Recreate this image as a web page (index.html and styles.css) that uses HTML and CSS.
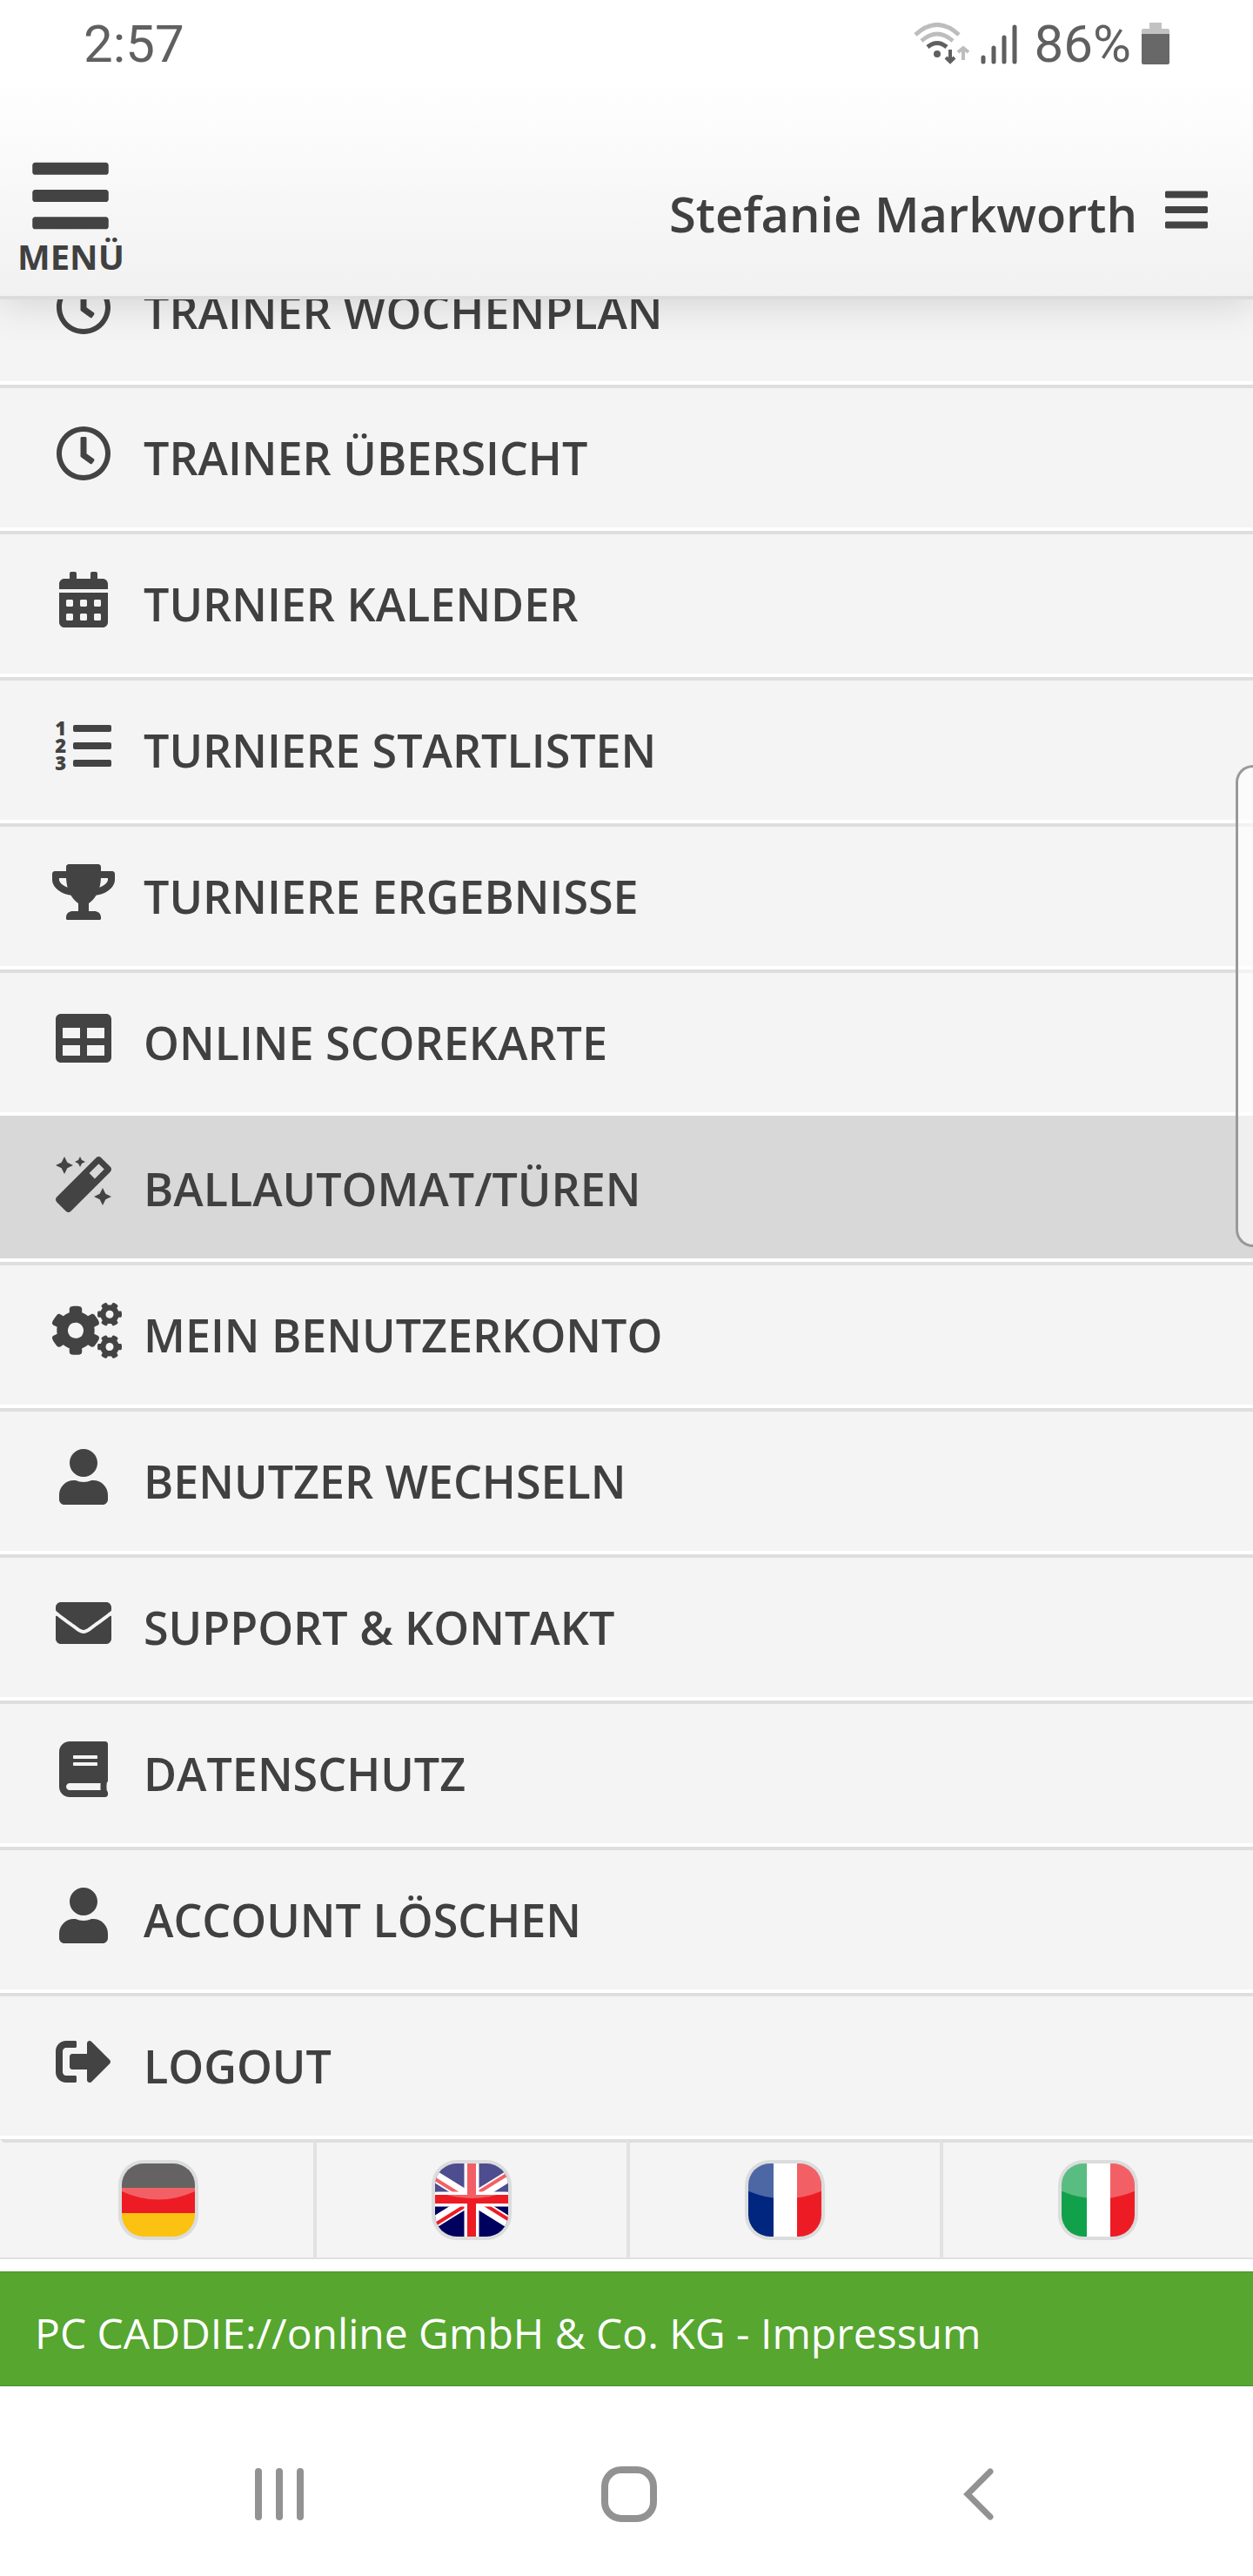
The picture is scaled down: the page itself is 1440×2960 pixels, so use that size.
FILE: index.html
```html
<!DOCTYPE html>
<html lang="de">
<head>
  <meta charset="UTF-8">
  <meta name="viewport" content="width=device-width, initial-scale=1.0">
  <title>PC CADDIE://online</title>
  <link rel="stylesheet" href="styles.css">
</head>
<body>
<header class="header">
  <div class="status">
    <span class="time">2:57</span>
    <div class="status-icons">
      <svg class="wifi" width="66" height="48" viewBox="0 0 66 48" fill="none">
        <path d="M3 14Q28-9 53 14" stroke="#bdbdbd" stroke-width="5"/>
        <path d="M10 21Q28 5 46 21" stroke="#bdbdbd" stroke-width="5"/>
        <path d="M17 28Q28 19 39 28" stroke="#5f5f5f" stroke-width="5"/>
        <circle cx="28" cy="36" r="4" fill="#5f5f5f"/>
        <path d="M43 31v12M38 40l5 5 5-5" stroke="#5f5f5f" stroke-width="4"/>
        <path d="M58 43V30M52 34l6-5 6 5" stroke="#bdbdbd" stroke-width="4"/>
      </svg>
      <svg class="signal" width="42" height="48" viewBox="0 0 42 48" stroke="#5f5f5f" stroke-width="5" stroke-linecap="round">
        <path d="M3 40v5M15 29v16M27 17v28M39 5v40"/>
      </svg>
      <span>86%</span>
      <svg class="battery" width="32" height="48" viewBox="0 0 32 48">
        <path d="M9 0h14v7h7q2 0 2 2v5H0V9q0-2 2-2h7z" fill="#c2c2c2"/>
        <path d="M0 13h32v33q0 2-2 2H2q-2 0-2-2z" fill="#686868"/>
      </svg>
    </div>
  </div>
  <div class="bar">
    <button class="menu-btn" type="button">
      <svg width="88" height="100" viewBox="0 0 448 512"><path d="M16 132h416c9 0 16-7 16-16V76c0-9-7-16-16-16H16C7 60 0 67 0 76v40c0 9 7 16 16 16zm0 160h416c9 0 16-7 16-16v-40c0-9-7-16-16-16H16c-9 0-16 7-16 16v40c0 9 7 16 16 16zm0 160h416c9 0 16-7 16-16v-40c0-9-7-16-16-16H16c-9 0-16 7-16 16v40c0 9 7 16 16 16z"/></svg>
      <span>MENÜ</span>
    </button>
    <button class="user-btn" type="button">
      <span>Stefanie Markworth</span>
      <svg width="49" height="56" viewBox="0 0 448 512"><path d="M16 132h416c9 0 16-7 16-16V76c0-9-7-16-16-16H16C7 60 0 67 0 76v40c0 9 7 16 16 16zm0 160h416c9 0 16-7 16-16v-40c0-9-7-16-16-16H16c-9 0-16 7-16 16v40c0 9 7 16 16 16zm0 160h416c9 0 16-7 16-16v-40c0-9-7-16-16-16H16c-9 0-16 7-16 16v40c0 9 7 16 16 16z"/></svg>
    </button>
  </div>
</header>

<nav class="menu">
  <a class="item" href="#">
    <svg class="icon" viewBox="0 0 512 512"><path id="clock" d="M256 8C119 8 8 119 8 256s111 248 248 248 248-111 248-248S393 8 256 8zm0 448c-110.500 0-200-89.500-200-200S145.500 56 256 56s200 89.500 200 200-89.500 200-200 200zm61.800-104.400l-84.900-61.700c-3.100-2.300-4.900-5.900-4.900-9.700V116c0-6.600 5.400-12 12-12h32c6.600 0 12 5.400 12 12v141.700l66.800 48.600c5.400 3.900 6.500 11.400 2.600 16.800L334.600 349c-3.900 5.300-11.400 6.500-16.800 2.600z"/></svg>
    <span>TRAINER WOCHENPLAN</span>
  </a>
  <a class="item" href="#">
    <svg class="icon" viewBox="0 0 512 512"><use href="#clock"/></svg>
    <span>TRAINER ÜBERSICHT</span>
  </a>
  <a class="item" href="#">
    <svg class="icon" viewBox="0 0 448 512"><path d="M0 464c0 26.500 21.500 48 48 48h352c26.500 0 48-21.500 48-48V192H0v272zm320-196c0-6.600 5.400-12 12-12h40c6.600 0 12 5.400 12 12v40c0 6.600-5.400 12-12 12h-40c-6.600 0-12-5.400-12-12v-40zm0 128c0-6.600 5.400-12 12-12h40c6.600 0 12 5.400 12 12v40c0 6.600-5.400 12-12 12h-40c-6.600 0-12-5.400-12-12v-40zM192 268c0-6.600 5.400-12 12-12h40c6.600 0 12 5.400 12 12v40c0 6.600-5.400 12-12 12h-40c-6.600 0-12-5.400-12-12v-40zm0 128c0-6.600 5.400-12 12-12h40c6.600 0 12 5.400 12 12v40c0 6.600-5.400 12-12 12h-40c-6.600 0-12-5.400-12-12v-40zM64 268c0-6.600 5.400-12 12-12h40c6.600 0 12 5.400 12 12v40c0 6.600-5.400 12-12 12H76c-6.600 0-12-5.400-12-12v-40zm0 128c0-6.600 5.400-12 12-12h40c6.600 0 12 5.400 12 12v40c0 6.600-5.400 12-12 12H76c-6.600 0-12-5.400-12-12v-40zM400 64h-48V16c0-8.800-7.200-16-16-16h-32c-8.800 0-16 7.200-16 16v48H160V16c0-8.800-7.200-16-16-16h-32c-8.800 0-16 7.200-16 16v48H48C21.500 64 0 85.500 0 112v48h448v-48c0-26.500-21.500-48-48-48z"/></svg>
    <span>TURNIER KALENDER</span>
  </a>
  <a class="item" href="#">
    <svg class="icon" viewBox="0 0 512 512">
      <text class="digit" x="46" y="160">1</text>
      <text class="digit" x="46" y="320">2</text>
      <text class="digit" x="46" y="480">3</text>
      <rect x="160" y="64" width="352" height="64" rx="16"/>
      <rect x="160" y="224" width="352" height="64" rx="16"/>
      <rect x="160" y="384" width="352" height="64" rx="16"/>
    </svg>
    <span>TURNIERE STARTLISTEN</span>
  </a>
  <a class="item" href="#">
    <svg class="icon" viewBox="0 0 576 512"><path d="M552 64H448V24c0-13.300-10.700-24-24-24H152c-13.300 0-24 10.700-24 24v40H24C10.700 64 0 74.700 0 88v56c0 35.700 22.500 72.400 61.900 100.700 31.500 22.700 69.800 37.100 110 41.700C203.300 338.500 240 360 240 360v72h-48c-35.300 0-64 20.700-64 56v12c0 6.600 5.400 12 12 12h296c6.600 0 12-5.400 12-12v-12c0-35.300-28.700-56-64-56h-48v-72s36.700-21.500 68.100-73.600c40.300-4.600 78.600-19 110-41.700 39.300-28.300 61.900-65 61.900-100.700V88c0-13.300-10.700-24-24-24zM99.300 192.800C74.900 175.200 64 155.600 64 144v-16h64.200c1 32.600 5.800 61.200 12.800 86.200-15.100-5.200-29.200-12.400-41.700-21.400zM512 144c0 16.100-17.700 36.100-35.300 48.800-12.500 9-26.700 16.200-41.800 21.400 7-25 11.800-53.600 12.800-86.200H512v16z"/></svg>
    <span>TURNIERE ERGEBNISSE</span>
  </a>
  <a class="item" href="#">
    <svg class="icon" viewBox="0 0 512 512"><path d="M464 32H48C21 32 0 53 0 80v352c0 27 21 48 48 48h416c27 0 48-21 48-48V80c0-27-21-48-48-48zM224 416H64v-96h160v96zm0-160H64v-96h160v96zm224 160H288v-96h160v96zm0-160H288v-96h160v96z"/></svg>
    <span>ONLINE SCOREKARTE</span>
  </a>
  <a class="item active" href="#">
    <svg class="icon" viewBox="0 0 512 512"><path d="M224 96l16-32 32-16-32-16-16-32-16 32-32 16 32 16 16 32zM80 160l26.660-53.330L160 80l-53.340-26.670L80 0 53.340 53.330 0 80l53.340 26.670L80 160zm352 128l-26.660 53.330L352 368l53.340 26.670L432 448l26.660-53.330L512 368l-53.340-26.670L432 288zm70.620-193.770L417.770 9.380C411.530 3.120 403.340 0 395.150 0c-8.190 0-16.380 3.120-22.630 9.380L9.380 372.520c-12.500 12.500-12.500 32.760 0 45.250l84.850 84.850c6.250 6.250 14.440 9.370 22.620 9.370 8.190 0 16.380-3.120 22.630-9.370l363.140-363.150c12.500-12.480 12.500-32.750 0-45.240zM359.450 203.460l-50.910-50.910 86.600-86.600 50.910 50.910-86.600 86.600z"/></svg>
    <span>BALLAUTOMAT/TÜREN</span>
  </a>
  <a class="item" href="#">
    <svg class="icon" viewBox="0 0 576 512"><path d="M512.100 191l-8.200 14.300c-3 5.300-9.400 7.500-15.100 5.400-11.800-4.400-22.600-10.700-32.100-18.600-4.600-3.800-5.800-10.500-2.800-15.700l8.200-14.300c-6.900-8-12.300-17.300-15.900-27.400h-16.500c-6 0-11.200-4.300-12.200-10.300-2-12-2.100-24.600 0-37.100 1-6 6.200-10.400 12.200-10.400h16.500c3.600-10.100 9-19.400 15.900-27.400l-8.200-14.300c-3-5.200-1.900-11.900 2.800-15.700 9.500-7.900 20.400-14.200 32.100-18.600 5.700-2.100 12.100.1 15.100 5.400l8.200 14.300c10.500-1.900 21.200-1.900 31.700 0L552 6.300c3-5.300 9.400-7.500 15.100-5.400 11.800 4.400 22.600 10.700 32.100 18.600 4.600 3.800 5.800 10.500 2.800 15.700l-8.200 14.300c6.900 8 12.300 17.300 15.900 27.400h16.500c6 0 11.200 4.300 12.200 10.300 2 12 2.100 24.600 0 37.100-1 6-6.200 10.400-12.200 10.400h-16.500c-3.600 10.100-9 19.400-15.900 27.400l8.200 14.300c3 5.200 1.900 11.900-2.800 15.700-9.500 7.900-20.400 14.200-32.100 18.600-5.700 2.100-12.100-.1-15.100-5.400l-8.200-14.300c-10.400 1.900-21.200 1.900-31.700 0zm-10.500-58.800c38.500 29.600 82.400-14.300 52.800-52.800-38.500-29.700-82.400 14.300-52.800 52.800zM386.300 286.100l33.700 16.800c10.100 5.800 14.500 18.100 10.500 29.100-8.900 24.200-26.400 46.400-42.600 65.800-7.400 8.900-20.200 11.100-30.300 5.300l-29.100-16.800c-16 13.700-34.600 24.600-54.900 31.700v33.600c0 11.600-8.300 21.600-19.700 23.600-24.600 4.200-50.400 4.400-75.900 0-11.500-2-20-11.900-20-23.600V418c-20.300-7.200-38.900-18-54.900-31.700L74 403c-10 5.800-22.900 3.600-30.300-5.300-16.200-19.400-33.300-41.600-42.200-65.700-4-10.900.4-23.200 10.500-29.100l33.300-16.800c-3.900-20.900-3.900-42.400 0-63.400L12 205.800c-10.100-5.800-14.600-18.100-10.500-29 8.900-24.200 26-46.400 42.200-65.800 7.400-8.900 20.200-11.100 30.300-5.300l29.100 16.800c16-13.700 34.600-24.600 54.900-31.700V57.100c0-11.500 8.200-21.500 19.600-23.500 24.600-4.200 50.500-4.400 76-.1 11.500 2 20 11.900 20 23.600v33.600c20.300 7.200 38.900 18 54.900 31.700l29.100-16.800c10-5.800 22.900-3.600 30.300 5.300 16.200 19.400 33.200 41.600 42.100 65.800 4 10.900.1 23.200-10 29.100l-33.700 16.800c3.900 21 3.900 42.500 0 63.500zm-117.600 21.100c59.200-77-28.700-164.900-105.700-105.700-59.200 77 28.700 164.900 105.700 105.700zm243.400 182.700l-8.200 14.300c-3 5.300-9.400 7.500-15.100 5.400-11.800-4.400-22.600-10.700-32.100-18.600-4.600-3.800-5.800-10.500-2.800-15.700l8.200-14.300c-6.900-8-12.300-17.300-15.900-27.400h-16.500c-6 0-11.200-4.300-12.200-10.300-2-12-2.100-24.600 0-37.100 1-6 6.200-10.400 12.200-10.400h16.500c3.600-10.100 9-19.400 15.900-27.400l-8.200-14.300c-3-5.200-1.900-11.900 2.800-15.700 9.500-7.900 20.400-14.200 32.100-18.600 5.700-2.100 12.100.1 15.100 5.400l8.200 14.300c10.500-1.900 21.200-1.900 31.700 0l8.200-14.300c3-5.300 9.400-7.500 15.100-5.400 11.800 4.400 22.600 10.700 32.100 18.600 4.600 3.800 5.800 10.500 2.800 15.700l-8.200 14.300c6.900 8 12.300 17.300 15.900 27.400h16.500c6 0 11.200 4.300 12.200 10.300 2 12 2.100 24.600 0 37.100-1 6-6.200 10.400-12.200 10.400h-16.500c-3.600 10.100-9 19.400-15.900 27.400l8.200 14.300c3 5.200 1.900 11.900-2.800 15.700-9.500 7.900-20.400 14.200-32.100 18.600-5.700 2.100-12.100-.1-15.100-5.400l-8.200-14.300c-10.400 1.900-21.200 1.900-31.700 0zM501.600 431c38.500 29.600 82.400-14.300 52.800-52.800-38.500-29.600-82.400 14.300-52.800 52.800z"/></svg>
    <span>MEIN BENUTZERKONTO</span>
  </a>
  <a class="item" href="#">
    <svg class="icon" viewBox="0 0 448 512"><path id="user" d="M224 256c70.700 0 128-57.300 128-128S294.700 0 224 0 96 57.300 96 128s57.300 128 128 128zm89.600 32h-16.700c-22.200 10.200-46.900 16-72.900 16s-50.600-5.800-72.900-16h-16.700C60.200 288 0 348.200 0 422.400V464c0 26.500 21.500 48 48 48h352c26.500 0 48-21.500 48-48v-41.600c0-74.200-60.200-134.400-134.400-134.400z"/></svg>
    <span>BENUTZER WECHSELN</span>
  </a>
  <a class="item" href="#">
    <svg class="icon" viewBox="0 0 512 512"><path d="M502.300 190.800c3.900-3.100 9.700-.2 9.700 4.700V400c0 26.500-21.500 48-48 48H48c-26.500 0-48-21.500-48-48V195.600c0-5 5.700-7.800 9.700-4.700 22.400 17.400 52.100 39.500 154.100 113.600 21.100 15.400 56.700 47.800 92.200 47.600 35.700.3 72-32.800 92.300-47.600 102-74.100 131.600-96.300 154-113.700zM256 320c23.200.4 56.600-29.200 73.400-41.400 132.700-96.300 142.800-104.700 173.400-128.700 5.800-4.500 9.200-11.500 9.200-18.900v-19c0-26.500-21.500-48-48-48H48c-26.500 0-48 21.500-48 48v19c0 7.400 3.400 14.300 9.200 18.900 30.600 23.900 40.700 32.400 173.400 128.700 16.800 12.200 50.200 41.800 73.400 41.400z"/></svg>
    <span>SUPPORT &amp; KONTAKT</span>
  </a>
  <a class="item" href="#">
    <svg class="icon" viewBox="0 0 448 512"><path d="M448 360V24c0-13.300-10.700-24-24-24H96C43 0 0 43 0 96v320c0 53 43 96 96 96h328c13.300 0 24-10.700 24-24v-16c0-7.500-3.500-14.300-8.900-18.700-4.200-15.400-4.200-59.300 0-74.700 5.400-4.300 8.900-11.100 8.900-18.600zM128 134c0-3.300 2.700-6 6-6h212c3.300 0 6 2.700 6 6v20c0 3.300-2.700 6-6 6H134c-3.300 0-6-2.700-6-6v-20zm0 64c0-3.300 2.700-6 6-6h212c3.300 0 6 2.700 6 6v20c0 3.300-2.700 6-6 6H134c-3.300 0-6-2.700-6-6v-20zm253.400 250H96c-17.700 0-32-14.300-32-32 0-17.600 14.400-32 32-32h285.400c-1.900 17.100-1.900 46.900 0 64z"/></svg>
    <span>DATENSCHUTZ</span>
  </a>
  <a class="item" href="#">
    <svg class="icon" viewBox="0 0 448 512"><use href="#user"/></svg>
    <span>ACCOUNT LÖSCHEN</span>
  </a>
  <a class="item" href="#">
    <svg class="icon" viewBox="0 0 512 512"><path d="M497 273L329 441c-15 15-41 4.500-41-17v-96H152c-13.300 0-24-10.700-24-24v-96c0-13.300 10.700-24 24-24h136V88c0-21.400 25.900-32 41-17l168 168c9.300 9.400 9.300 24.600 0 34zM192 436v-40c0-6.600-5.400-12-12-12H96c-17.700 0-32-14.300-32-32V160c0-17.700 14.300-32 32-32h84c6.600 0 12-5.400 12-12V76c0-6.600-5.400-12-12-12H96c-53 0-96 43-96 96v192c0 53 43 96 96 96h84c6.600 0 12-5.400 12-12z"/></svg>
    <span>LOGOUT</span>
  </a>
</nav>

<div class="languages">
  <a class="lang" href="#" aria-label="Deutsch">
    <svg class="flag" viewBox="0 0 92 92">
      <defs>
        <clipPath id="shape"><rect x="4" y="4" width="84" height="84" rx="25"/></clipPath>
      </defs>
      <rect class="rim" width="92" height="92" rx="29"/>
      <g clip-path="url(#shape)">
        <path fill="#231f20" d="M0 0h92v32H0z"/>
        <path fill="#ed1c24" d="M0 32h92v29H0z"/>
        <path fill="#fcc212" d="M0 61h92v31H0z"/>
        <path class="gloss" d="M0 0h92v34Q46 57 0 34z"/>
      </g>
    </svg>
  </a>
  <a class="lang" href="#" aria-label="English">
    <svg class="flag" viewBox="0 0 92 92">
      <rect class="rim" width="92" height="92" rx="29"/>
      <g clip-path="url(#shape)">
        <path fill="#00005f" d="M0 0h92v92H0z"/>
        <path stroke="#fff" stroke-width="13" d="M-4 14l100 62M96 14L-4 76"/>
        <path stroke="#ed1c24" stroke-width="4" d="M-4 17l50 31M46 42l50 31M46 42l50-31M-4 79l50-31"/>
        <path stroke="#fff" stroke-width="17" d="M46 0v92M0 45h92"/>
        <path stroke="#ed1c24" stroke-width="10" d="M46 0v92M0 45h92"/>
        <path class="gloss" d="M0 0h92v34Q46 54 0 34z"/>
      </g>
    </svg>
  </a>
  <a class="lang" href="#" aria-label="Français">
    <svg class="flag" viewBox="0 0 92 92">
      <rect class="rim" width="92" height="92" rx="29"/>
      <g clip-path="url(#shape)">
        <path fill="#00267f" d="M0 0h33v92H0z"/>
        <path fill="#fff" d="M33 0h27v92H33z"/>
        <path fill="#ed1c24" d="M60 0h32v92H60z"/>
        <path class="gloss" d="M0 0h92v34Q46 55 0 34z"/>
      </g>
    </svg>
  </a>
  <a class="lang" href="#" aria-label="Italiano">
    <svg class="flag" viewBox="0 0 92 92">
      <rect class="rim" width="92" height="92" rx="29"/>
      <g clip-path="url(#shape)">
        <path fill="#12a14b" d="M0 0h33v92H0z"/>
        <path fill="#fff" d="M33 0h27v92H33z"/>
        <path fill="#ed1c24" d="M60 0h32v92H60z"/>
        <path class="gloss" d="M0 0h92v34Q46 55 0 34z"/>
      </g>
    </svg>
  </a>
</div>

<footer class="footer">PC CADDIE://online GmbH &amp; Co. KG - <a href="#">Impressum</a></footer>

<div class="system-nav">
  <button type="button" aria-label="Letzte Apps">
    <svg width="64" height="64" viewBox="0 0 64 64"><path stroke-width="8" d="M8 6v52M32 6v52M56 6v52"/></svg>
  </button>
  <button type="button" aria-label="Startseite">
    <svg width="64" height="64" viewBox="0 0 64 64"><rect x="4" y="4" width="56" height="56" rx="19" stroke-width="8"/></svg>
  </button>
  <button type="button" aria-label="Zurück">
    <svg width="64" height="64" viewBox="0 0 64 64"><path stroke-width="7" d="M45 6L19 32l26 26"/></svg>
  </button>
</div>

<div class="edge-handle"></div>
</body>
</html>
```
FILE: styles.css
```css
* {
  box-sizing: border-box;
}

body {
  margin: 0;
  position: relative;
  background: #fff;
  color: #404040;
  font-family: "Open Sans", "Noto Sans", sans-serif;
}

a {
  color: inherit;
  text-decoration: none;
}

button {
  background: none;
  border: none;
  color: inherit;
  cursor: pointer;
  font-family: inherit;
  padding: 0;
}

svg {
  display: block;
  flex: none;
}

/* header */
.header {
  position: relative;
  z-index: 1;
  border-bottom: 4px solid #dcdcdc;
  background: linear-gradient(#fff 90px, #f1f1f1);
  box-shadow: 0 8px 40px rgba(0, 0, 0, 0.12);
}

.status {
  display: flex;
  align-items: center;
  justify-content: space-between;
  height: 100px;
  padding: 0 96px;
  color: #606060;
  font-family: Roboto, sans-serif;
  font-size: 60px;
}

.status-icons {
  display: flex;
  align-items: center;
}

.signal {
  margin: 0 20px 0 12px;
}

.battery {
  margin-left: 12px;
}

.bar {
  display: flex;
  align-items: center;
  justify-content: space-between;
  height: 240px;
  padding: 50px 52px 0 20px;
}

.bar svg,
.icon {
  fill: #434343;
}

.menu-btn {
  display: flex;
  flex-direction: column;
  align-items: center;
  align-self: flex-start;
  margin-top: 25px;
  font-size: 40px;
  font-weight: 700;
  line-height: 40px;
}

.user-btn {
  display: flex;
  align-items: center;
  gap: 32px;
  font-size: 56px;
  font-weight: 600;
  line-height: 60px;
}

.user-btn svg {
  margin-bottom: 8px;
}

/* menu, the first row scrolls under the header */
.menu {
  margin-top: -70px;
}

.item {
  display: flex;
  align-items: center;
  gap: 33px;
  height: 168px;
  padding: 0 0 2px 60px;
  border-top: 4px solid #dedede;
  border-bottom: 4px solid #fff;
  background: #f4f4f4;
  font-size: 52px;
  font-weight: 600;
}

.item.active {
  border-top-color: #d8d8d8;
  background: #d8d8d8;
}

.icon {
  width: 72px;
  height: 64px;
  margin-bottom: 8px;
  overflow: visible;
}

.digit {
  font-size: 176px;
  font-weight: 800;
  text-anchor: middle;
}

/* languages */
.languages {
  display: grid;
  grid-template-columns: repeat(4, 1fr);
  margin-bottom: 14px;
  border-bottom: 2px solid #e0e0e0;
  background: #f4f4f4;
}

.lang {
  display: flex;
  justify-content: center;
  padding: 20px 0;
  border-top: 4px solid #dedede;
  border-left: 4px solid #e2e2e2;
}

.lang:first-child {
  border-left-color: #f4f4f4;
}

.flag {
  width: 92px;
  height: 92px;
}

.rim {
  fill: #dbdddc;
}

.gloss {
  fill: #fff;
  fill-opacity: 0.3;
}

.footer {
  padding: 37px 40px 27px;
  border: solid #43912a;
  border-width: 1px 0;
  background: #56a630;
  color: #fff;
  font-size: 48px;
  line-height: 66px;
}

/* android buttons */
.system-nav {
  display: grid;
  grid-template-columns: repeat(3, 1fr);
  justify-items: center;
  padding: 92px 114px 62px 120px;
}

.system-nav svg {
  fill: none;
  stroke: #929292;
  stroke-linecap: round;
}

.edge-handle {
  position: absolute;
  top: 879px;
  right: 0;
  width: 20px;
  height: 554px;
  border: 3px solid #999;
  border-right: none;
  border-radius: 20px 0 0 20px;
  background: rgba(255, 255, 255, 0.6);
}
```
